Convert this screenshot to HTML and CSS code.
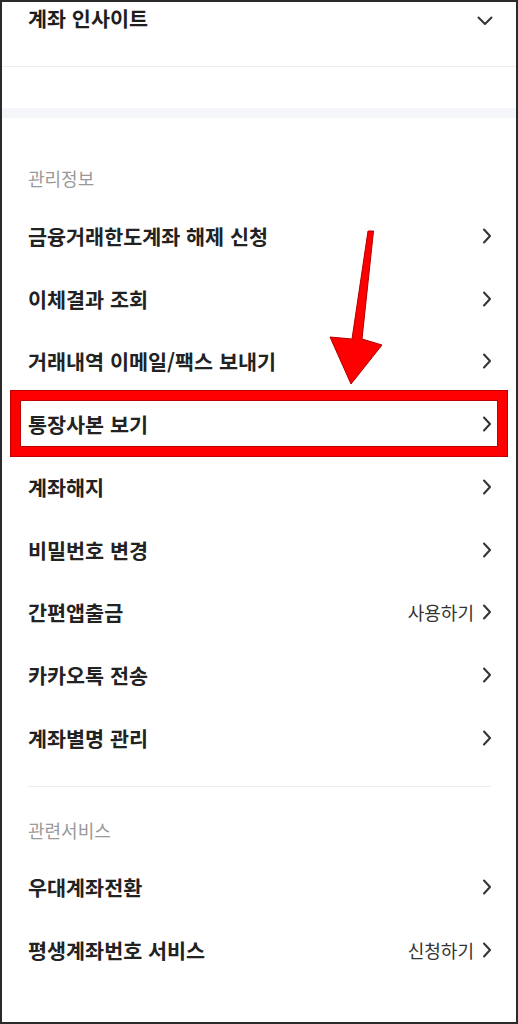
FILE: index.html
```html
<!DOCTYPE html>
<html lang="ko">
<head>
<meta charset="utf-8">
<link rel="stylesheet" href="styles.css">
</head>
<body>
<div class="frame">
  <div class="header">
    <span class="title">계좌 인사이트</span>
    <svg class="chev-down" width="16" height="10" viewBox="0 0 16 10"><path d="M1.5 1.5 L8 8 L14.5 1.5" fill="none" stroke="#333" stroke-width="2" stroke-linecap="round" stroke-linejoin="round"/></svg>
  </div>
  <div class="gap"></div>
  <div class="band"></div>

  <div class="section">
    <div class="label">관리정보</div>
    <div class="row"><span class="txt">금융거래한도계좌 해제 신청</span><span class="right"><svg class="chev" width="10" height="16" viewBox="0 0 10 16"><path d="M2 1.5 L8 8 L2 14.5" fill="none" stroke="#333" stroke-width="2" stroke-linecap="round" stroke-linejoin="round"/></svg></span></div>
    <div class="row"><span class="txt">이체결과 조회</span><span class="right"><svg class="chev" width="10" height="16" viewBox="0 0 10 16"><path d="M2 1.5 L8 8 L2 14.5" fill="none" stroke="#333" stroke-width="2" stroke-linecap="round" stroke-linejoin="round"/></svg></span></div>
    <div class="row"><span class="txt">거래내역 이메일/팩스 보내기</span><span class="right"><svg class="chev" width="10" height="16" viewBox="0 0 10 16"><path d="M2 1.5 L8 8 L2 14.5" fill="none" stroke="#333" stroke-width="2" stroke-linecap="round" stroke-linejoin="round"/></svg></span></div>
    <div class="row highlighted"><span class="txt">통장사본 보기</span><span class="right"><svg class="chev" width="10" height="16" viewBox="0 0 10 16"><path d="M2 1.5 L8 8 L2 14.5" fill="none" stroke="#333" stroke-width="2" stroke-linecap="round" stroke-linejoin="round"/></svg></span><div class="redbox"></div></div>
    <div class="row"><span class="txt">계좌해지</span><span class="right"><svg class="chev" width="10" height="16" viewBox="0 0 10 16"><path d="M2 1.5 L8 8 L2 14.5" fill="none" stroke="#333" stroke-width="2" stroke-linecap="round" stroke-linejoin="round"/></svg></span></div>
    <div class="row"><span class="txt">비밀번호 변경</span><span class="right"><svg class="chev" width="10" height="16" viewBox="0 0 10 16"><path d="M2 1.5 L8 8 L2 14.5" fill="none" stroke="#333" stroke-width="2" stroke-linecap="round" stroke-linejoin="round"/></svg></span></div>
    <div class="row"><span class="txt">간편앱출금</span><span class="right"><span class="sub">사용하기</span><svg class="chev" width="10" height="16" viewBox="0 0 10 16"><path d="M2 1.5 L8 8 L2 14.5" fill="none" stroke="#333" stroke-width="2" stroke-linecap="round" stroke-linejoin="round"/></svg></span></div>
    <div class="row"><span class="txt">카카오톡 전송</span><span class="right"><svg class="chev" width="10" height="16" viewBox="0 0 10 16"><path d="M2 1.5 L8 8 L2 14.5" fill="none" stroke="#333" stroke-width="2" stroke-linecap="round" stroke-linejoin="round"/></svg></span></div>
    <div class="row"><span class="txt">계좌별명 관리</span><span class="right"><svg class="chev" width="10" height="16" viewBox="0 0 10 16"><path d="M2 1.5 L8 8 L2 14.5" fill="none" stroke="#333" stroke-width="2" stroke-linecap="round" stroke-linejoin="round"/></svg></span></div>
  </div>

  <div class="divider"></div>

  <div class="section second">
    <div class="label">관련서비스</div>
    <div class="row"><span class="txt">우대계좌전환</span><span class="right"><svg class="chev" width="10" height="16" viewBox="0 0 10 16"><path d="M2 1.5 L8 8 L2 14.5" fill="none" stroke="#333" stroke-width="2" stroke-linecap="round" stroke-linejoin="round"/></svg></span></div>
    <div class="row"><span class="txt">평생계좌번호 서비스</span><span class="right"><span class="sub">신청하기</span><svg class="chev" width="10" height="16" viewBox="0 0 10 16"><path d="M2 1.5 L8 8 L2 14.5" fill="none" stroke="#333" stroke-width="2" stroke-linecap="round" stroke-linejoin="round"/></svg></span></div>
  </div>

  <svg class="arrow" width="518" height="400" viewBox="0 0 518 400">
    <polygon points="368,231 373.5,231 362,339 382,345 351,384 330,337 352,339" fill="#ff0000" stroke="#b00000" stroke-width="1" stroke-linejoin="round"/>
  </svg>
</div>
</body>
</html>
```

FILE: styles.css
```css
* { box-sizing: border-box; }
html, body { margin: 0; padding: 0; background: #fff; }
body {
  font-family: "Noto Sans CJK KR", "Noto Sans", sans-serif;
  color: #222;
}
.frame {
  position: relative;
  width: 518px;
  height: 1024px;
  border: 2px solid #2a2a2a;
  overflow: hidden;
  background: #fff;
}
.header {
  height: 65px;
  display: flex;
  justify-content: space-between;
  align-items: flex-start;
  padding: 2px 26px 0 26px;
  border-bottom: 1px solid #ececec;
}
.title {
  font-size: 20.7px;
  font-weight: 700;
  line-height: 28px;
  color: #1e1e1e;
}
.chev-down { margin-top: 12px; margin-right: -3px; }
.gap { height: 41px; }
.band { height: 10px; background: #f4f6f9; }
.section { padding-top: 48px; }
.section.second { padding-top: 31px; }
.label {
  padding: 0 26px;
  font-size: 18px;
  line-height: 24px;
  color: #9a9a9a;
  margin-bottom: 14.6px;
}
.section.second .label { margin-bottom: 13.6px; }
.row {
  position: relative;
  height: 62.75px;
  display: flex;
  justify-content: space-between;
  align-items: center;
  padding: 0 24px 0 26px;
}
.txt {
  font-size: 20.7px;
  font-weight: 700;
  color: #222;
  line-height: 28px;
}
.right {
  display: flex;
  align-items: center;
  gap: 8px;
}
.sub {
  font-size: 18px;
  color: #333;
  line-height: 24px;
}
.chev { display: block; }
.redbox {
  position: absolute;
  left: 9px;
  top: -2px;
  width: 496px;
  height: 65px;
  border: 9px solid #ff0000;
  box-shadow: 0 0 0 1px #c00000, inset 0 0 0 1px #c00000;
  pointer-events: none;
}
.divider {
  margin: 16.6px 25px 0 26px;
  height: 1px;
  background: #ececec;
}
.arrow {
  position: absolute;
  left: -2px;
  top: -2px;
}
```
